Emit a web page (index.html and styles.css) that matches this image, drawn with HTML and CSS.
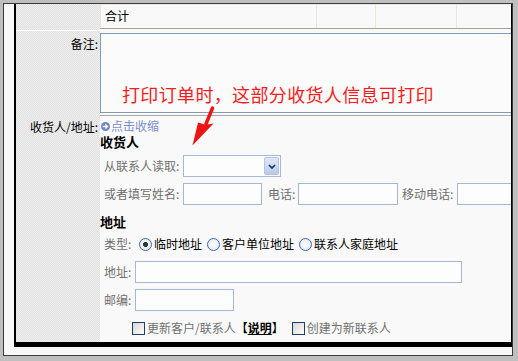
FILE: index.html
```html
<!DOCTYPE html>
<html lang="zh-CN">
  <head>
    <meta charset="UTF-8" />
    <title>订单 - 收货人信息</title>
    <link rel="stylesheet" href="styles.css">
  </head>
  <body>
    <div class="frame">
      <div class="sheet">
        <!-- totals row of the items table -->
        <div class="row row-sum">
          <div class="lbl"></div>
          <div class="val">
            <div class="sum">
              <div class="sum-cell sum-title">合计</div>
              <div class="sum-cell sum-c2"></div>
              <div class="sum-cell sum-c3"></div>
              <div class="sum-cell sum-c4"></div>
            </div>
          </div>
        </div>

        <div class="row row-note">
          <div class="lbl">备注:</div>
          <div class="val">
            <textarea class="note"></textarea>
          </div>
        </div>

        <div class="row row-addr">
          <div class="lbl">收货人/地址:</div>
          <div class="val">
            <div class="toggle">
              <svg class="toggle-ico" viewBox="0 0 9 9">
                <circle cx="4.5" cy="4.5" r="4.5" fill="#6f86cc" />
                <path d="M1.8 4.5h4.6M4.4 2.4l2.1 2.1-2.1 2.1" stroke="#fff" stroke-width="1.3" fill="none" />
              </svg>点击收缩
            </div>
            <div class="head">收货人</div>

            <div class="line">
              <span class="lab lab-long">从联系人读取:</span>
              <span class="select">
                <span class="select-btn">
                  <svg viewBox="0 0 8 5"><polyline points="1,1 4,4 7,1" fill="none" stroke="#1e2f6b" stroke-width="1.7" /></svg>
                </span>
              </span>
            </div>
            <div class="line">
              <span class="lab lab-long">或者填写姓名:</span>
              <input class="txt w-name" type="text">
              <span class="lab lab-tel">电话:</span>
              <input class="txt w-tel" type="text">
              <span class="lab lab-mob">移动电话:</span>
              <input class="txt w-mob" type="text">
            </div>

            <div class="head head-addr">地址</div>
            <div class="line">
              <span class="lab lab-type">类型:</span>
              <label class="opt"><input type="radio" name="kind" checked>临时地址</label>
              <label class="opt"><input type="radio" name="kind">客户单位地址</label>
              <label class="opt"><input type="radio" name="kind">联系人家庭地址</label>
            </div>
            <div class="line">
              <span class="lab lab-short">地址:</span>
              <input class="txt w-addr" type="text">
            </div>
            <div class="line">
              <span class="lab lab-short">邮编:</span>
              <input class="txt w-zip" type="text">
            </div>
            <div class="line line-checks">
              <label class="chk"><input type="checkbox">更新客户/联系人<span class="help">【<a href="#">说明</a>】</span></label>
              <label class="chk chk-new"><input type="checkbox">创建为新联系人</label>
            </div>
          </div>
        </div>
      </div>

      <!-- annotation drawn over the screenshot -->
      <div class="tip">打印订单时，这部分收货人信息可打印</div>
      <svg class="tip-arrow" viewBox="0 0 32 48">
        <path d="M22.5 3 L16 19" stroke="#ee1414" stroke-width="3.4" stroke-linecap="round" />
        <polygon points="2.5,40.5 8,17.5 15.5,19.8 23.5,18.5" fill="#ee1414" />
      </svg>
    </div>
  </body>
</html>
```

FILE: styles.css
```css
body {
  margin: 0;
  background: #bfbfbf;
  font: 12px/16px "Noto Sans CJK SC", sans-serif;
  color: #000;
}

.frame {
  position: relative;
  box-sizing: border-box;
  width: 510px;
  height: 353px;
  margin: 3px 0 0 3px;
  border: 1px solid #3b3b3b;
  background: #f8f8f8;
  padding: 0 0 8px 10px;
}

.sheet {
  box-sizing: border-box;
  width: 498px;
  height: 343px;
  border-left: 2px solid #000;
  border-right: 1px solid #000;
  border-bottom: 5px solid #000;
  overflow: hidden;
}

.row {
  display: grid;
  grid-template-columns: 84px 1fr;
}

.lbl {
  background-color: #e8e8e8;
  background-image: repeating-conic-gradient(#e1e1e1 0 25%, #efefef 0 50%);
  background-size: 2px 2px;
  text-align: right;
  padding: 5px 2px 0 0;
}

.val {
  background: #f9f9f9;
  min-width: 0;
  overflow: hidden;
}

/* totals row */
.row-sum {
  height: 27px;
}

.row-sum .lbl {
  border-bottom: 1px solid #fff;
  padding: 0;
}

.sum {
  display: flex;
  box-sizing: border-box;
  height: 25px;
  border-top: 1px solid #ece5da;
  border-bottom: 1px solid #a9a393;
}

.sum-cell {
  box-sizing: border-box;
  border-right: 1px solid #ece5da;
}

.sum-title {
  width: 217px;
  border-left: 1px solid #ece5da;
  padding-left: 4px;
  line-height: 22px;
}

.sum-c2 {
  width: 59px;
}

.sum-c3 {
  width: 81px;
}

.sum-c4 {
  flex: 1;
  border-right: none;
}

/* remarks */
.row-note .val {
  padding-top: 2px;
  border-bottom: 1px solid #a7a7a7;
}

.note {
  display: block;
  box-sizing: border-box;
  width: 430px;
  height: 80px;
  margin: 0 0 2px;
  border: 1px solid #7f9db9;
  background: #fbfbfb;
  resize: none;
}

/* consignee / address */
.row-addr .lbl {
  padding-top: 3px;
}

.toggle {
  display: flex;
  align-items: center;
  height: 16px;
  margin-top: 2px;
  padding-left: 1px;
  color: #7b8ed3;
}

.toggle-ico {
  width: 9px;
  height: 9px;
  margin-right: 1px;
}

.head {
  font-size: 13px;
  font-weight: bold;
  line-height: 16px;
  margin-bottom: 2px;
}

.head-addr {
  margin: 6px 0 0;
}

.line {
  display: flex;
  align-items: center;
  height: 28px;
  padding-left: 4px;
  white-space: nowrap;
}

.lab {
  flex: none;
  color: #707070;
}

.lab-long {
  width: 79px;
}

.lab-tel {
  width: 30px;
  margin-left: 6px;
}

.lab-mob {
  width: 55px;
  margin-left: 4px;
}

.lab-type {
  width: 35px;
}

.lab-short {
  width: 31px;
}

.txt {
  flex: none;
  box-sizing: border-box;
  height: 22px;
  margin: 0;
  padding: 0 2px;
  border: 1px solid #a3b7d6;
  background: #fdfdfd;
}

.w-name {
  width: 79px;
}

.w-tel {
  width: 100px;
}

.w-mob {
  width: 80px;
}

.w-addr {
  width: 327px;
}

.w-zip {
  width: 99px;
}

.select {
  display: flex;
  justify-content: flex-end;
  box-sizing: border-box;
  width: 98px;
  height: 22px;
  padding: 1px;
  border: 1px solid #a5b9d8;
  background: #fdfdfd;
}

.select-btn {
  display: flex;
  align-items: center;
  justify-content: center;
  box-sizing: border-box;
  width: 15px;
  border: 1px solid #b3c4e3;
  border-radius: 2px;
  background: linear-gradient(#e0e8f7, #b9cae9);
}

.select-btn svg {
  width: 8px;
  height: 5px;
}

/* radios and checkboxes */
.opt,
.chk {
  display: flex;
  align-items: center;
  flex: none;
}

.opt {
  margin-right: 5px;
}

.opt input {
  appearance: none;
  box-sizing: border-box;
  width: 13px;
  height: 13px;
  margin: 0 2px 0 0;
  border: 1px solid #3a66b4;
  border-radius: 50%;
  background: radial-gradient(#ffffff, #dde3ea);
}

.opt input:checked {
  background: radial-gradient(circle, #2b3a2b 0 2.2px, #f6f7f9 2.8px, #dde3ea);
}

.chk {
  color: #707070;
}

.chk input {
  appearance: none;
  box-sizing: border-box;
  width: 13px;
  height: 13px;
  margin: 0 2px 0 0;
  border: 1px solid #1f3b74;
  background: linear-gradient(135deg, #d9d9d1, #fbfbfb);
}

.line-checks {
  padding-left: 32px;
}

.chk-new {
  margin-left: 8px;
}

.help {
  color: #000;
}

.help a {
  color: #000;
  font-weight: bold;
}

/* red annotation */
.tip {
  position: absolute;
  left: 118px;
  top: 80px;
  color: #f51c1c;
  font-size: 18px;
  line-height: 20px;
  letter-spacing: 0.35px;
  white-space: nowrap;
}

.tip-arrow {
  position: absolute;
  left: 186px;
  top: 101px;
  width: 32px;
  height: 48px;
}
```
